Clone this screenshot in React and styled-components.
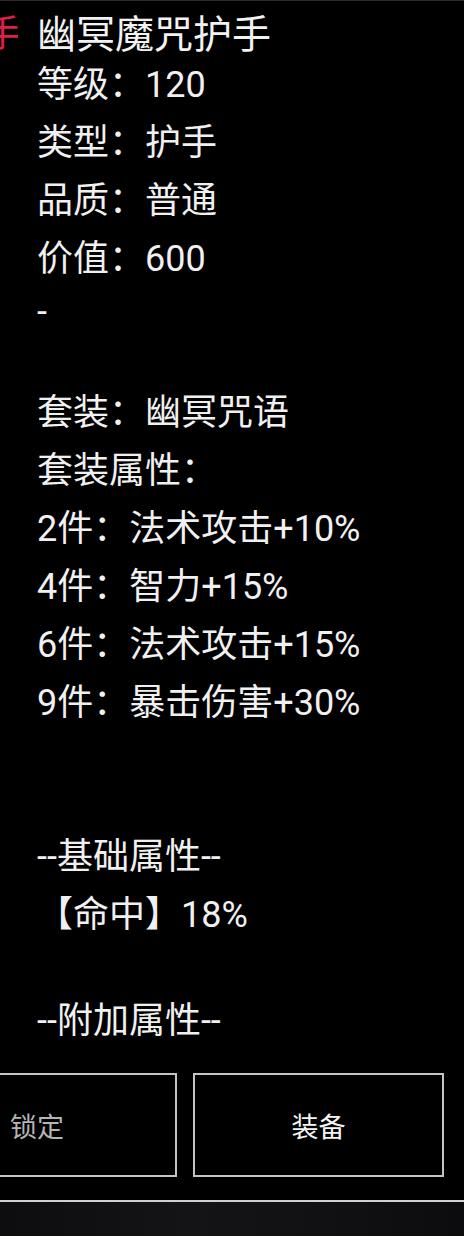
import React from 'react';
import styled, { createGlobalStyle } from 'styled-components';

const GlobalStyle = createGlobalStyle`
  html, body {
    margin: 0;
    padding: 0;
    background: #000;
  }
  body {
    font-family: Roboto, "Noto Sans CJK SC", sans-serif;
    -webkit-font-smoothing: antialiased;
  }
`;

const Screen = styled.div`
  width: 464px;
  height: 1236px;
  overflow: hidden;
  background: #000;
  color: #f0f0f0;
  display: flex;
  flex-direction: column;
  border-top: 1px solid #2a2a2a;
  box-sizing: border-box;
`;

const Header = styled.div`
  display: flex;
  align-items: center;
  height: 55px;
  padding-top: 13px;
  box-sizing: border-box;
`;

/* the previous item's name, scrolled mostly out of view on the left */
const RedClip = styled.div`
  width: 18px;
  overflow: hidden;
  flex-shrink: 0;
  font-size: 37px;
  line-height: 42px;
  color: #e01e46;
  white-space: nowrap;
`;

const RedText = styled.span`
  display: inline-block;
  margin-left: -16px;
  margin-top: -4px;
`;

const Title = styled.div`
  margin-left: 19px;
  font-size: 39px;
  line-height: 42px;
  white-space: nowrap;
  color: #f2f2f2;
`;

const Body = styled.div`
  padding-left: 37px;
  font-size: 36px;
`;

const Line = styled.div`
  height: ${(p) => (p.$short ? 48 : 58)}px;
  line-height: ${(p) => (p.$short ? 48 : 58)}px;
  white-space: nowrap;
`;

const Buttons = styled.div`
  display: flex;
  gap: 16px;
  margin-top: 23px;
  padding-right: 20px;
`;

const Button = styled.div`
  flex-shrink: 0;
  width: ${(p) => p.$width}px;
  margin-left: ${(p) => p.$offset || 0}px;
  height: 104px;
  box-sizing: border-box;
  border: 2px solid #c4c4c4;
  display: flex;
  align-items: center;
  justify-content: center;
  font-size: 27px;
  color: ${(p) => (p.$dim ? '#b4b4b4' : '#f4f4f4')};
`;

const Divider = styled.div`
  margin-top: 23px;
  height: 2px;
  background: #d0d0d0;
`;

const NavBar = styled.div`
  flex: 1;
  background: linear-gradient(90deg, #0d0d0f 0%, #141416 40%, #111113 70%, #0c0c0e 100%);
`;

const lines = [
  '等级：120',
  '类型：护手',
  '品质：普通',
  '价值：600',
  { text: '-', short: true },
  { text: '', short: true },
  '套装：幽冥咒语',
  '套装属性：',
  '2件：法术攻击+10%',
  '4件：智力+15%',
  '6件：法术攻击+15%',
  '9件：暴击伤害+30%',
  { text: '', short: true },
  { text: '', short: true },
  '--基础属性--',
  '【命中】18%',
  { text: '', short: true },
  '--附加属性--',
];

export default function App() {
  return (
    <>
      <GlobalStyle />
      <Screen>
        <Header>
          <RedClip>
            <RedText>手</RedText>
          </RedClip>
          <Title>幽冥魔咒护手</Title>
        </Header>
        <Body>
          {lines.map((l, i) => {
            const item = typeof l === 'string' ? { text: l } : l;
            return (
              <Line key={i} $short={item.short}>
                {item.text || '\u00a0'}
              </Line>
            );
          })}
        </Body>
        <Buttons>
          <Button $width={280} $offset={-103} $dim>
            锁定
          </Button>
          <Button $width={251}>装备</Button>
        </Buttons>
        <Divider />
        <NavBar />
      </Screen>
    </>
  );
}
